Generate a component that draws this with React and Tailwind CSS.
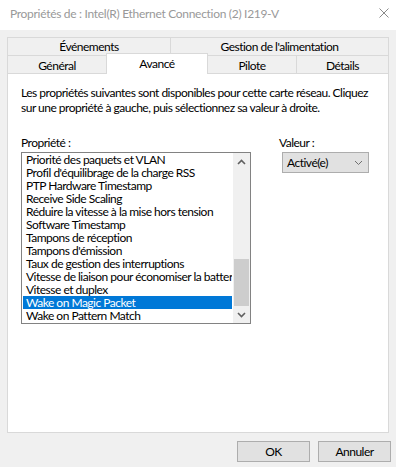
import React from "react";

const items = [
  "Priorité des paquets et VLAN",
  "Profil d'équilibrage de la charge RSS",
  "PTP Hardware Timestamp",
  "Receive Side Scaling",
  "Réduire la vitesse à la mise hors tension",
  "Software Timestamp",
  "Tampons de réception",
  "Tampons d'émission",
  "Taux de gestion des interruptions",
  "Vitesse de liaison pour économiser la batterie",
  "Vitesse et duplex",
  "Wake on Magic Packet",
  "Wake on Pattern Match",
];

function Chevron({ up, color = "#606060", w = 1.6 }) {
  return (
    <svg width="9" height="6" viewBox="0 0 9 6">
      {up ? (
        <polyline points="1,5 4.5,1.5 8,5" fill="none" stroke={color} strokeWidth={w} />
      ) : (
        <polyline points="1,1 4.5,4.5 8,1" fill="none" stroke={color} strokeWidth={w} />
      )}
    </svg>
  );
}

export default function App() {
  return (
    <div className="w-[396px] h-[467px] bg-[#f0f0f0] font-['Lato',sans-serif] text-[12px] tracking-[-0.5px] text-black flex flex-col overflow-hidden">
      {/* Title bar */}
      <div className="h-[30px] bg-white flex items-start justify-between pl-[10px] pr-[7px] pt-[6px] shrink-0">
        <span className="leading-[16px] tracking-[-0.3px] text-[#999999] whitespace-nowrap">
          Propriétés de : Intel(R) Ethernet Connection (2) I219-V
        </span>
        <svg width="10" height="10" viewBox="0 0 10 10" className="mt-[2px]">
          <path d="M0.5 0.5 L9.5 9.5 M9.5 0.5 L0.5 9.5" stroke="#8a8a8a" strokeWidth="1" fill="none" />
        </svg>
      </div>

      {/* Tabs row 1 */}
      <div className="mt-[7px] ml-[7px] w-[382px] h-[18px] flex border-l border-[#d9d9d9] shrink-0">
        <div className="w-[163px] h-full border-t border-r border-[#d9d9d9] flex items-center justify-center leading-[15px]">
          Événements
        </div>
        <div className="flex-1 h-full border-t border-r border-[#d9d9d9] flex items-center justify-center leading-[15px]">
          Gestion de l'alimentation
        </div>
      </div>

      {/* Tabs row 2 */}
      <div className="ml-[7px] w-[382px] h-[18px] flex items-end border-l border-[#d9d9d9] shrink-0">
        <div className="w-[98px] h-[18px] border-t border-[#d9d9d9] flex items-center justify-center leading-[15px] pt-[2px]">
          Général
        </div>
        <div className="relative z-10 w-[102px] h-[21px] -mb-px bg-white border-t border-l border-r border-[#d9d9d9] flex items-center justify-center leading-[15px] pb-[1px]">
          Avancé
        </div>
        <div className="w-[89px] h-[18px] border-t border-r border-[#d9d9d9] flex items-center justify-center leading-[15px] pt-[2px]">
          Pilote
        </div>
        <div className="flex-1 h-[18px] border-t border-r border-[#d9d9d9] flex items-center justify-center leading-[15px] pt-[2px]">
          Détails
        </div>
      </div>

      {/* Panel */}
      <div className="ml-[7px] w-[382px] h-[360px] bg-white border border-[#d9d9d9] pl-[13px] pr-[8px] pt-[11px] shrink-0">
        <p className="leading-[15px]">
          Les propriétés suivantes sont disponibles pour cette carte réseau. Cliquez sur une propriété à gauche, puis sélectionnez sa valeur à droite.
        </p>

        <div className="mt-[20px] flex">
          <div className="w-[230px] flex flex-col">
            <div className="leading-[15px]">Propriété :</div>
            <div className="mt-[2px] w-[230px] h-[172px] border border-[#828282] bg-white flex">
              <div className="flex-1 px-px flex flex-col overflow-hidden">
                {items.map((t, i) => (
                  <div
                    key={t}
                    className={
                      i === 11
                        ? "h-[13px] leading-[13px] pl-[3px] whitespace-nowrap overflow-hidden bg-[#0078d7] text-white"
                        : "h-[13px] leading-[13px] pl-[3px] whitespace-nowrap overflow-hidden"
                    }
                  >
                    {t}
                  </div>
                ))}
              </div>
              <div className="w-[17px] bg-[#f0f0f0] flex flex-col">
                <div className="h-[17px] flex items-center justify-center">
                  <Chevron up />
                </div>
                <div className="flex-1" />
                <div className="h-[47px] mx-px bg-[#cdcdcd]" />
                <div className="h-[17px] flex items-center justify-center">
                  <Chevron />
                </div>
              </div>
            </div>
          </div>

          <div className="ml-[28px] flex flex-col">
            <div className="leading-[15px]">Valeur :</div>
            <div className="mt-[2px] ml-[3px] w-[87px] h-[21px] bg-[#e1e1e1] border border-[#adadad] flex items-center justify-between pl-[4px] pr-[5px]">
              <span className="leading-[15px]">Activé(e)</span>
              <Chevron color="#707070" w={1} />
            </div>
          </div>
        </div>
      </div>

      {/* Buttons */}
      <div className="mt-[8px] flex justify-end gap-[8px] pr-[5px] shrink-0">
        <div className="w-[73px] h-[21px] bg-[#e1e1e1] border border-[#adadad] flex items-center justify-center leading-[15px]">
          OK
        </div>
        <div className="w-[73px] h-[21px] bg-[#e1e1e1] border border-[#adadad] flex items-center justify-center leading-[15px]">
          Annuler
        </div>
      </div>
    </div>
  );
}
